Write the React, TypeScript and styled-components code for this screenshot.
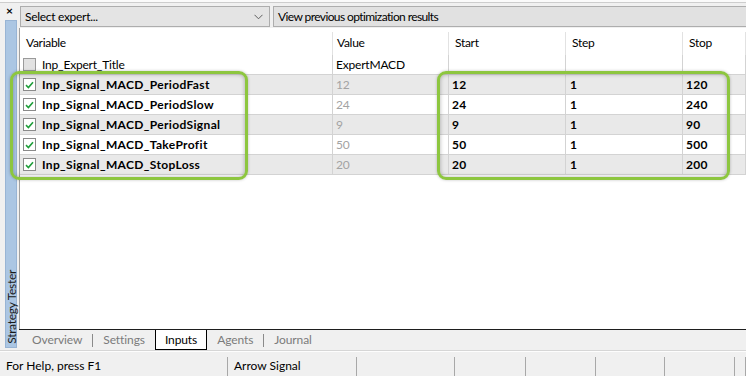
import React from "react";
import styled, { createGlobalStyle } from "styled-components";

const GlobalStyle = createGlobalStyle`
html, body {
  margin: 0;
  padding: 0;
}
body {
  background-color: #f0f0f0;
  font-family: Lato, "Segoe UI", "Liberation Sans", sans-serif;
  font-size: 12px;
  letter-spacing: -0.3px;
  color: #000;
}
`;

const Window = styled.div`
  position: relative;
  width: 746px;
  height: 376px;
  overflow: hidden;
  display: flex;
  flex-direction: column;
  background-color: #f0f0f0;
`;

const TopEdge = styled.div`
  height: 2px;
  background-color: #fafafa;
  border-bottom: 1px solid #cdcdcd;
`;

const Body = styled.div`
  flex: 1;
  display: flex;
  min-height: 0;
`;

const SidePanel = styled.div`
  width: 19px;
  display: flex;
  flex-direction: column;
`;

const Close = styled.div`
  height: 17px;
  line-height: 16px;
  padding-left: 6px;
  font-size: 12px;
  font-weight: bold;
`;

const SideBar = styled.div`
  flex: 1;
  margin: 0 2px 2px 5px;
  background-color: #abc6e3;
  border: 1px solid #98b4d4;
  display: flex;
  flex-direction: column;
  justify-content: flex-end;
  align-items: center;
  padding-bottom: 3px;
`;

const SideLabel = styled.span`
  writing-mode: vertical-rl;
  transform: rotate(180deg);
  font-size: 12px;
  color: #1a1a1a;
  white-space: nowrap;
`;

const Main = styled.div`
  flex: 1;
  display: flex;
  flex-direction: column;
  min-width: 0;
`;

const Toolbar = styled.div`
  height: 22px;
  padding: 3px 0 0 1px;
  display: flex;
  gap: 3px;
`;

const Combo = styled.div`
  width: 250px;
  height: 21px;
  box-sizing: border-box;
  display: flex;
  align-items: center;
  justify-content: space-between;
  padding: 0 6px 0 4px;
  background-color: #e4e4e4;
  border: 1px solid #adadad;
`;

const Button = styled.div`
  flex: 1;
  height: 21px;
  box-sizing: border-box;
  display: flex;
  align-items: center;
  padding-left: 4px;
  letter-spacing: -0.6px;
  background-color: #e1e1e1;
  border: 1px solid #adadad;
  border-right: none;
`;

const Panel = styled.div`
  flex: 1;
  background-color: #fff;
  border-left: 1px solid #a0a0a0;
`;

const COLS = "313px 116px 117px 117px 1fr";

const HeaderRow = styled.div`
  display: grid;
  grid-template-columns: ${COLS};
  height: 27px;
`;

const HeadCell = styled.div<{ $pad: number }>`
  position: relative;
  padding: 7px 0 0 ${(p) => p.$pad}px;
  &::after {
    content: "";
    position: absolute;
    right: 0;
    top: 4px;
    bottom: 0;
    width: 1px;
    background-color: #e2e2e2;
  }
`;

const Row = styled.div<{ $shade: boolean }>`
  display: grid;
  grid-template-columns: ${COLS};
  height: 20px;
  box-sizing: border-box;
  border-bottom: 1px solid #d3d3d3;
  background-color: ${(p) => (p.$shade ? "#e9e9e9" : "#fff")};
`;

const Cell = styled.div<{ $tone?: "bold" | "dim" | "plain"; $pad?: number }>`
  display: flex;
  align-items: center;
  gap: 6px;
  box-sizing: border-box;
  padding-left: ${(p) => p.$pad ?? 3}px;
  border-right: 1px solid #d3d3d3;
  white-space: nowrap;
  overflow: hidden;
  font-weight: ${(p) => (p.$tone === "bold" ? "bold" : "normal")};
  letter-spacing: ${(p) => (p.$tone === "bold" ? "0.35px" : "-0.2px")};
  color: ${(p) => (p.$tone === "dim" ? "#a3a3a3" : "#000")};
`;

const Box = styled.span<{ $on: boolean }>`
  width: 11px;
  height: 11px;
  flex: none;
  border: 1px solid ${(p) => (p.$on ? "#8a8a8a" : "#9a9a9a")};
  background-color: ${(p) => (p.$on ? "#fff" : "#e2e2e2")};
  display: flex;
  align-items: center;
  justify-content: center;
`;

const TabStrip = styled.div`
  height: 20px;
  border-top: 1px solid #1e1e1e;
  display: flex;
  align-items: flex-start;
  padding-left: 3px;
`;

const Tab = styled.div<{ $active?: boolean }>`
  height: 19px;
  line-height: 19px;
  padding: 0 ${(p) => (p.$active ? "9px" : "10px")};
  color: ${(p) => (p.$active ? "#000" : "#7b7b7b")};
  background-color: ${(p) => (p.$active ? "#fff" : "transparent")};
  border: ${(p) => (p.$active ? "1px solid #000" : "none")};
  border-top: none;
  font-size: 12px;
  letter-spacing: -0.1px;
`;

const TabSep = styled.span`
  width: 1px;
  height: 13px;
  margin-top: 4px;
  background-color: #8a8a8a;
`;

const StatusBar = styled.div`
  height: 25px;
  border-top: 1px solid #d6d6d6;
  box-shadow: inset 0 1px 0 #fdfdfd;
  display: flex;
  align-items: stretch;
`;

const Pane = styled.div<{ $w?: number }>`
  width: ${(p) => (p.$w ? `${p.$w}px` : "auto")};
  flex: ${(p) => (p.$w ? "none" : 1)};
  box-sizing: border-box;
  padding: 3px 0 0 6px;
  display: flex;
  align-items: center;
  font-size: 12px;
  letter-spacing: 0;
  position: relative;
  &::after {
    content: "";
    position: absolute;
    right: 0;
    top: 6px;
    bottom: 0;
    width: 1px;
    background-color: #a8a8a8;
  }
`;

const Highlight = styled.div<{ $x: number; $w: number }>`
  position: absolute;
  left: ${(p) => p.$x}px;
  top: 71px;
  width: ${(p) => p.$w}px;
  height: 109px;
  box-sizing: border-box;
  border: 3px solid #8dc63f;
  border-radius: 9px;
  box-shadow: 0 0 3px rgba(0, 0, 0, 0.25), inset 0 0 4px rgba(0, 0, 0, 0.3);
  pointer-events: none;
`;

const Check = () => (
  <svg width="9" height="8" viewBox="0 0 9 8">
    <path d="M1 4.2 L3.4 6.5 L8 1.2" fill="none" stroke="#1f9e3a" strokeWidth="1.6" />
  </svg>
);

const Chevron = () => (
  <svg width="9" height="6" viewBox="0 0 9 6">
    <path d="M0.5 0.8 L4.5 4.8 L8.5 0.8" fill="none" stroke="#5e5e5e" strokeWidth="1" />
  </svg>
);

const inputs = [
  { name: "Inp_Signal_MACD_PeriodFast", value: "12", start: "12", step: "1", stop: "120" },
  { name: "Inp_Signal_MACD_PeriodSlow", value: "24", start: "24", step: "1", stop: "240" },
  { name: "Inp_Signal_MACD_PeriodSignal", value: "9", start: "9", step: "1", stop: "90" },
  { name: "Inp_Signal_MACD_TakeProfit", value: "50", start: "50", step: "1", stop: "500" },
  { name: "Inp_Signal_MACD_StopLoss", value: "20", start: "20", step: "1", stop: "200" },
];

const statusWidths = [228, 129, 98, 71, 70, 69, 70];

export default function App() {
  return (
    <Window>
      <GlobalStyle />
      <TopEdge />
      <Body>
        <SidePanel>
          <Close>×</Close>
          <SideBar>
            <SideLabel>Strategy Tester</SideLabel>
          </SideBar>
        </SidePanel>
        <Main>
          <Toolbar>
            <Combo>
              <span>Select expert...</span>
              <Chevron />
            </Combo>
            <Button>View previous optimization results</Button>
          </Toolbar>
          <Panel>
            <HeaderRow>
              <HeadCell $pad={6}>Variable</HeadCell>
              <HeadCell $pad={4}>Value</HeadCell>
              <HeadCell $pad={6}>Start</HeadCell>
              <HeadCell $pad={6}>Step</HeadCell>
              <HeadCell $pad={6}>Stop</HeadCell>
            </HeaderRow>
            <Row $shade={false}>
              <Cell>
                <Box $on={false} />
                <span>Inp_Expert_Title</span>
              </Cell>
              <Cell>ExpertMACD</Cell>
              <Cell />
              <Cell />
              <Cell />
            </Row>
            {inputs.map((r, i) => (
              <Row key={r.name} $shade={i % 2 === 0}>
                <Cell $tone="bold">
                  <Box $on>
                    <Check />
                  </Box>
                  <span>{r.name}</span>
                </Cell>
                <Cell $tone="dim">{r.value}</Cell>
                <Cell $tone="bold">{r.start}</Cell>
                <Cell $tone="bold" $pad={4}>{r.step}</Cell>
                <Cell $tone="bold">{r.stop}</Cell>
              </Row>
            ))}
          </Panel>
          <TabStrip>
            <Tab>Overview</Tab>
            <TabSep />
            <Tab>Settings</Tab>
            <Tab $active>Inputs</Tab>
            <Tab>Agents</Tab>
            <TabSep />
            <Tab>Journal</Tab>
          </TabStrip>
        </Main>
      </Body>
      <StatusBar>
        <Pane $w={statusWidths[0]}>For Help, press F1</Pane>
        <Pane $w={statusWidths[1]}>Arrow Signal</Pane>
        {statusWidths.slice(2).map((w, i) => (
          <Pane key={i} $w={w} />
        ))}
        <Pane />
      </StatusBar>
      <Highlight $x={10} $w={238} />
      <Highlight $x={437} $w={293} />
    </Window>
  );
}
